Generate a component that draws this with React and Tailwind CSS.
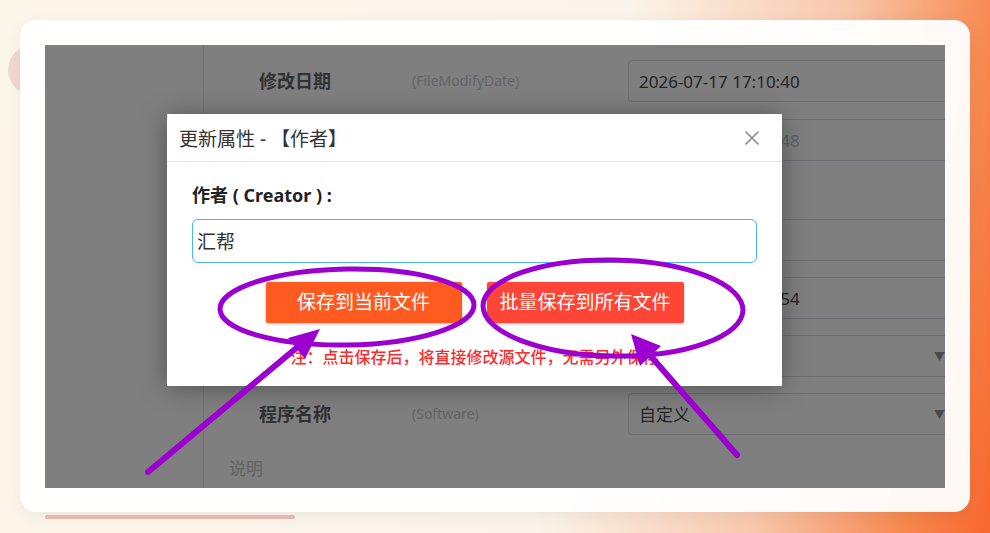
import React from "react";

function Row({ label, desc, value, valueClass = "text-[#4a4a4a]", select = false, className = "" }) {
  return (
    <div className={`flex items-center h-[42px] ${className}`}>
      <div className="w-[153px] text-[18px] font-bold text-[#606266] leading-none">{label}</div>
      <div className="w-[216px] text-[14px] text-[#c8cacf] leading-none">{desc}</div>
      <div className="w-[330px] h-[42px] shrink-0 border border-[#dcdfe6] rounded-[4px] flex items-center justify-between pl-[10px] pr-[12px]">
        <span className={`text-[17px] leading-none ${valueClass}`}>{value}</span>
        {select && <span className="text-[11px] text-[#909399] leading-none">▼</span>}
      </div>
    </div>
  );
}

export default function App() {
  return (
    <div className="relative w-[990px] h-[533px] overflow-hidden bg-[linear-gradient(100deg,#fbf6ea_0%,#fbf4ea_58%,#f8c8ad_78%,#f7884f_92%,#f8672f_100%)] font-['Noto_Sans','Noto_Sans_CJK_SC',sans-serif]">
      {/* pink blob behind card */}
      <div className="absolute left-[8px] top-[45px] w-[60px] h-[50px] rounded-full bg-[#f1d9cf]" />

      <div className="relative pt-[20px] pl-[20px]">
        <div className="w-[950px] h-[492px] rounded-[16px] bg-white/95 shadow-[0_4px_16px_rgba(0,0,0,0.06)] pt-[25px] pl-[25px]">
          {/* inner screenshot */}
          <div className="relative w-[900px] h-[443px] overflow-hidden bg-white flex">
            <div className="w-[159px] h-full border-r border-[#e6e6e6] shrink-0" />
            <div className="flex-1 flex flex-col pl-[55px] pt-[15px]">
              <Row label="修改日期" desc="(FileModifyDate)" value="2026-07-17 17:10:40" />
              <Row label="访问日期" desc="(FileAccessDate)" value="2026-07-17 17:10:48" valueClass="text-[#c0c4cc]" className="mt-[17px]" />
              <Row label="创建日期" desc="(FileCreateDate)" value="" className="mt-[58px]" />
              <Row label="修改日期" desc="(ModifyDate)" value="2026-07-17 17:10:54" className="mt-[16px]" />
              <Row label="制作工具" desc="(CreatorTool)" value="自定义" select className="mt-[16px]" />
              <Row label="程序名称" desc="(Software)" value="自定义" select className="mt-[16px]" />
              <div className="mt-[25px] -ml-[30px] text-[17px] text-[#c8c8c8] leading-none">说明</div>
            </div>

            {/* modal backdrop */}
            <div className="absolute inset-0 bg-black/50" />

            {/* dialog */}
            <div className="absolute left-[122px] top-[69px] w-[615px] h-[272px] bg-white shadow-[0_2px_24px_rgba(0,0,0,0.35)] flex flex-col">
              <div className="h-[48px] shrink-0 border-b border-[#e4e4e4] flex items-center justify-between pl-[12px] pr-[23px] pt-[4px]">
                <span className="text-[19px] text-[#333] leading-none">更新属性 - 【作者】</span>
                <svg width="14" height="14" viewBox="0 0 14 14" className="shrink-0 -mt-[3px]">
                  <path d="M1 1L13 13M13 1L1 13" stroke="#8a8a8a" strokeWidth="1.6" strokeLinecap="round" />
                </svg>
              </div>
              <div className="flex flex-col px-[25px]">
                <div className="mt-[24px] text-[18px] font-bold text-[#222] leading-none">作者 ( Creator ) :</div>
                <div className="mt-[15px] h-[44px] border-[1.5px] border-[#4db3ff] rounded-[6px] flex items-center pl-[4px] pt-[3px]">
                  <span className="text-[19px] text-[#333] leading-none">汇帮</span>
                </div>
                <div className="mt-[19px] flex justify-center gap-[25px]">
                  <div className="w-[196px] h-[41px] rounded-[2px] bg-[#ff5a1f] shadow-[0_1px_3px_rgba(0,0,0,0.25)] flex items-center justify-center text-[19px] text-white leading-none">保存到当前文件</div>
                  <div className="w-[197px] h-[41px] rounded-[2px] bg-[#ff4535] shadow-[0_1px_3px_rgba(0,0,0,0.25)] flex items-center justify-center text-[19px] text-white leading-none">批量保存到所有文件</div>
                </div>
                <div className="mt-[26px] text-center text-[16px] font-medium text-[#ff2a2a] leading-none">注：点击保存后，将直接修改源文件，无需另外保存</div>
              </div>
            </div>
          </div>
        </div>
        <div className="ml-[25px] mt-[3px] w-[250px] h-[4px] rounded-full bg-[#e8b6b4]" />
      </div>

      {/* purple annotations */}
      <svg className="absolute left-0 top-0 pointer-events-none" width="990" height="533" viewBox="0 0 990 533">
        <g fill="none" stroke="#9b00d0" strokeWidth="5" strokeLinecap="round">
          <ellipse cx="347" cy="307" rx="127" ry="38" transform="rotate(-1 347 307)" />
          <ellipse cx="613" cy="308" rx="130" ry="48" transform="rotate(1 613 308)" />
          <line x1="148" y1="472" x2="300" y2="345" strokeWidth="6" />
          <line x1="737" y1="455" x2="648" y2="353" strokeWidth="6" />
        </g>
        <g fill="#9b00d0">
          <polygon points="320,329 288,338 305,359" />
          <polygon points="631,334 661,346 640,366" />
        </g>
      </svg>
    </div>
  );
}
